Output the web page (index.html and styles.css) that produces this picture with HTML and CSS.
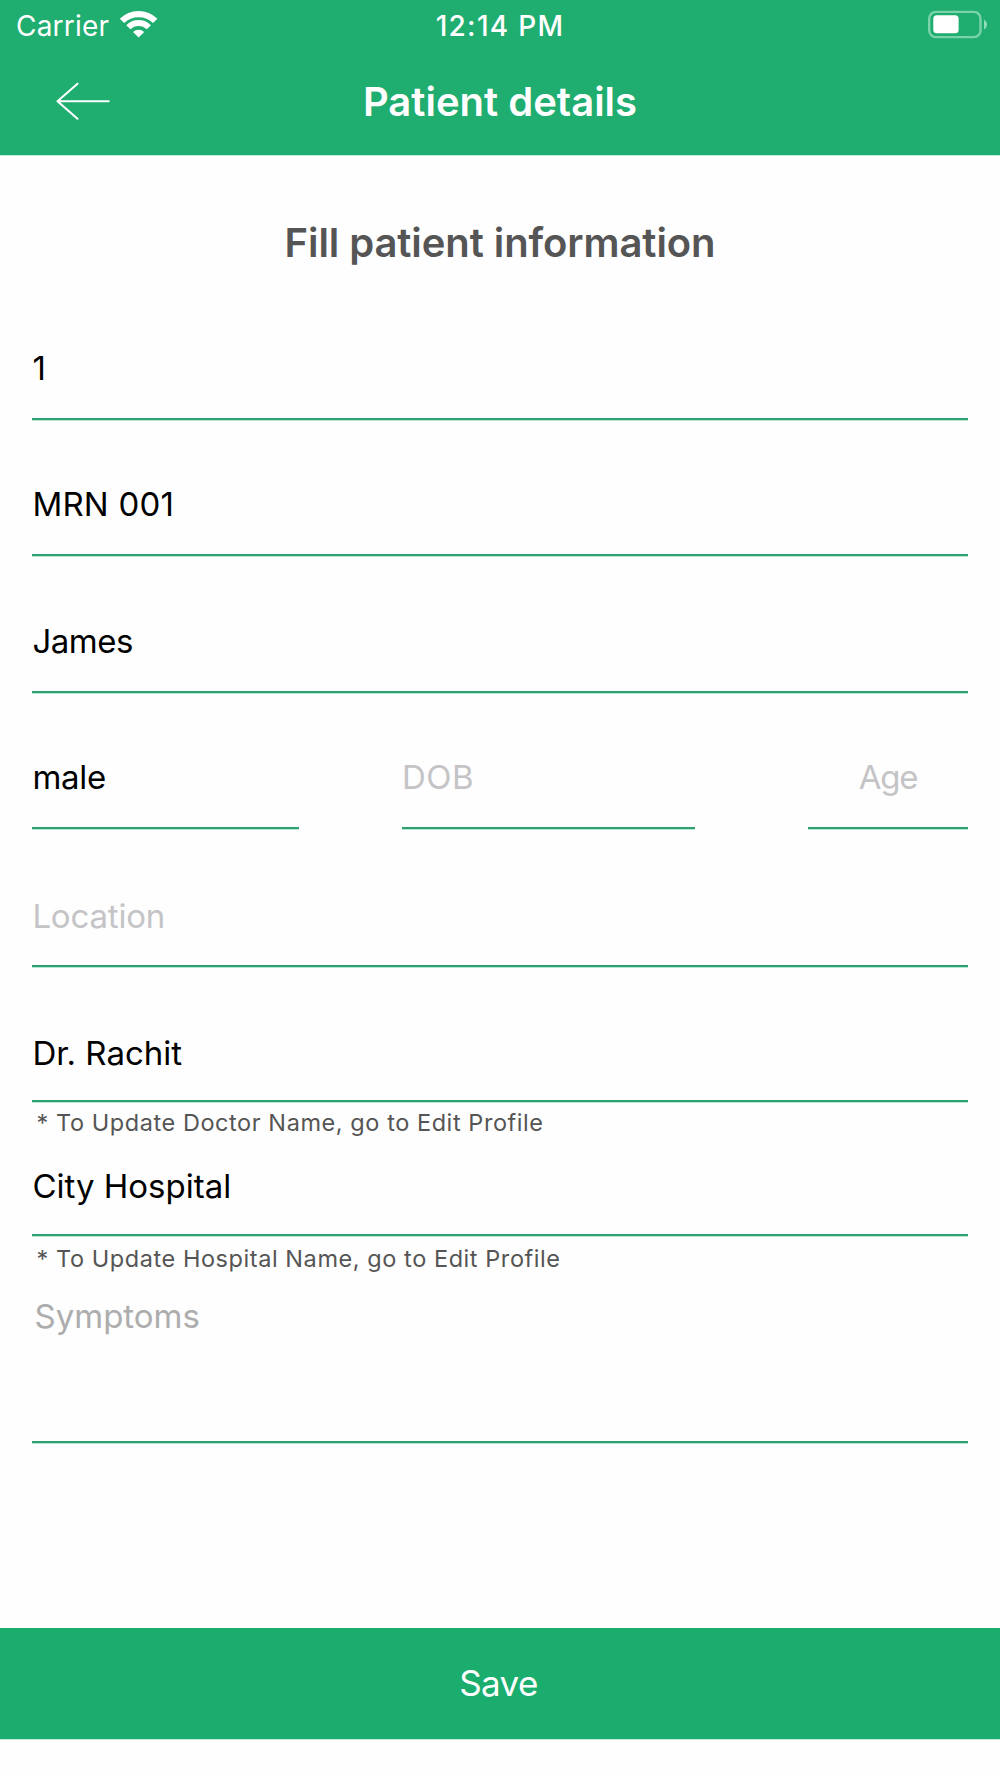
FILE: index.html
```
<!DOCTYPE html>
<html lang="en">
<head>
<meta charset="utf-8">
<title>Patient details</title>
<link rel="stylesheet" href="styles.css">
</head>
<body>
<div class="screen">
  <header class="header">
    <div class="status">
      <div class="carrier">
        <span>Carrier</span>
        <svg class="wifi" width="40" height="28" viewBox="0 0 40 28">
          <path d="M4 10.9A23.5 23.5 0 0 1 37.2 10.9" fill="none" stroke="#fff" stroke-width="6.2"/>
          <path d="M10.35 17.25A14.5 14.5 0 0 1 30.85 17.25" fill="none" stroke="#fff" stroke-width="6"/>
          <path d="M20.6 27.4L15 21.9A8.3 8.3 0 0 1 26.2 21.9Z" fill="#fff"/>
        </svg>
      </div>
      <div class="clock">12:14 PM</div>
      <svg class="battery" width="62" height="30" viewBox="0 0 62 30">
        <rect x="4.2" y="1.9" width="51.3" height="25.2" rx="6.5" fill="none" stroke="#7ad3aa" stroke-width="2.4"/>
        <rect x="8.3" y="5.3" width="25.3" height="18" rx="3.5" fill="#fff"/>
        <path d="M59 9.7Q62 11.2 62 14.5T59 19.5Z" fill="#8ddbb8"/>
      </svg>
    </div>
    <div class="nav">
      <svg class="back" width="56" height="40" viewBox="0 0 56 40">
        <path d="M53.7 19.2H2.5M22.5 1.7L2.5 19.2L22.5 36.7" fill="none" stroke="#fff" stroke-width="2.1" stroke-linecap="round" stroke-linejoin="round"/>
      </svg>
      <h1 class="title">Patient details</h1>
    </div>
  </header>

  <main class="form">
    <h2 class="heading">Fill patient information</h2>
    <div class="field">1</div>
    <div class="field spread">MRN 001</div>
    <div class="field third snug">James</div>
    <div class="row">
      <div class="field male">male</div>
      <div class="field dob empty">DOB</div>
      <div class="field age empty">Age</div>
    </div>
    <div class="field location empty">Location</div>
    <div class="field noted doctor">Dr. Rachit</div>
    <p class="note">* To Update Doctor Name, go to Edit Profile</p>
    <div class="field noted hospital">City Hospital</div>
    <p class="note second">* To Update Hospital Name, go to Edit Profile</p>
    <div class="field symptoms">Symptoms</div>
  </main>

  <div class="save">Save</div>
</div>
</body>
</html>
```

FILE: styles.css
```
* { box-sizing: border-box; }

body {
  margin: 0;
  background: #fefefe;
  font-family: Inter, "Liberation Sans", sans-serif;
  color: #000;
}

.screen {
  display: flex;
  flex-direction: column;
  width: 1000px;
  height: 1778px;
}

/* Header */
.header {
  height: 155px;
  background: #1fad70;
  box-shadow: 0 1px 0 #c4ead9;
  color: #fff;
}

.status {
  display: grid;
  grid-template-columns: 1fr auto 1fr;
  align-items: center;
  height: 50px;
  padding: 0 13px 0 16px;
  font-size: 28px;
  line-height: 48px;
}

.carrier {
  display: flex;
  align-items: center;
  gap: 9px;
  letter-spacing: 0.2px;
}

.carrier span,
.clock { padding-top: 2px; }

.wifi { margin-bottom: 2px; }

.clock {
  font-weight: 500;
  letter-spacing: 1.3px;
  padding-right: 3px;
}

.battery {
  justify-self: end;
}

.nav {
  display: grid;
  grid-template-columns: 1fr auto 1fr;
  align-items: center;
  height: 104px;
  padding: 0 55px;
}

.title {
  margin: 0;
  font-size: 40px;
  font-weight: 600;
  line-height: 50px;
}

/* Form */
.form {
  flex: 1;
  padding: 0 32px;
}

.heading {
  margin: 63px 0 76px;
  text-align: center;
  font-size: 40px;
  font-weight: 600;
  line-height: 50px;
  letter-spacing: -0.08px;
  color: #555;
}

.field {
  height: 76px;
  margin-bottom: 60px;
  padding-left: 0.4px;
  border-bottom: 2px solid #2fa070;
  box-shadow: 0 1px 0 #b5e8d2;
  font-size: 33px;
  line-height: 48px;
}

.spread { letter-spacing: 0.2px; }
.snug { letter-spacing: -0.5px; }
.third { margin-top: 61px; }
.empty { color: #c4c4c6; }

.row {
  display: flex;
  margin-bottom: 62px;
}

.row .field { margin-bottom: 0; }

.male {
  width: 267px;
  letter-spacing: -0.3px;
}

.dob {
  width: 293px;
  margin-left: 103px;
  padding-left: 0;
  letter-spacing: 0.5px;
}

.age {
  width: 160px;
  margin-left: auto;
  padding-left: 0;
  text-align: center;
  letter-spacing: -1.2px;
}

.location {
  margin-bottom: 61px;
  line-height: 50px;
  letter-spacing: -0.18px;
}

.noted {
  height: 74px;
  margin-bottom: 0;
}

.doctor { line-height: 50px; }

.note {
  margin: 5px 0 0;
  padding-left: 4.5px;
  font-size: 23.5px;
  line-height: 31px;
  letter-spacing: 0.565px;
  color: #555;
}

.hospital { margin-top: 24px; }
.second { margin-top: 7px; }

.symptoms {
  height: 151px;
  margin: 18px 0 0;
  padding-left: 2.5px;
  color: #adadad;
}

/* Footer action */
.save {
  height: 111px;
  margin-bottom: 39px;
  background: #1aad6e;
  box-shadow: 0 1px 0 #c4ead9;
  color: #fff;
  text-align: center;
  font-size: 35px;
  line-height: 111px;
  letter-spacing: -0.6px;
  padding-right: 3px;
}
```
